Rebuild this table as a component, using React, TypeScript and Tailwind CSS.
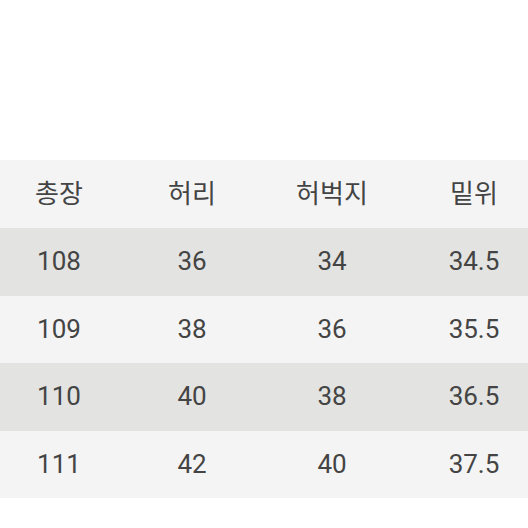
const header = ['총장', '허리', '허벅지', '밑위'];

const rows = [
  ['108', '36', '34', '34.5'],
  ['109', '38', '36', '35.5'],
  ['110', '40', '38', '36.5'],
  ['111', '42', '40', '37.5'],
];

// column widths picked so the centres land where the screenshot has them
const cols = 'grid grid-cols-[118px_148px_132px_152px] w-[550px]';

export default function App() {
  return (
    <div
      className="w-[528px] h-[528px] bg-white overflow-hidden pt-[160px] text-[#444444] text-[26px]"
      style={{ fontFamily: 'Roboto, "Noto Sans CJK KR", sans-serif' }}
    >
      <div className={`${cols} h-[68px] items-center bg-[#f4f4f4]`}>
        {header.map((h) => (
          <div key={h} className="text-center">{h}</div>
        ))}
      </div>

      {rows.map((r, i) => (
        <div
          key={r[0]}
          className={`${cols} ${i === 3 ? 'h-[67px]' : 'h-[67.5px]'} items-center ${i % 2 === 0 ? 'bg-[#e3e3e1]' : 'bg-[#f4f4f4]'}`}
        >
          {r.map((v, j) => (
            <div key={j} className="text-center">{v}</div>
          ))}
        </div>
      ))}
    </div>
  );
}
